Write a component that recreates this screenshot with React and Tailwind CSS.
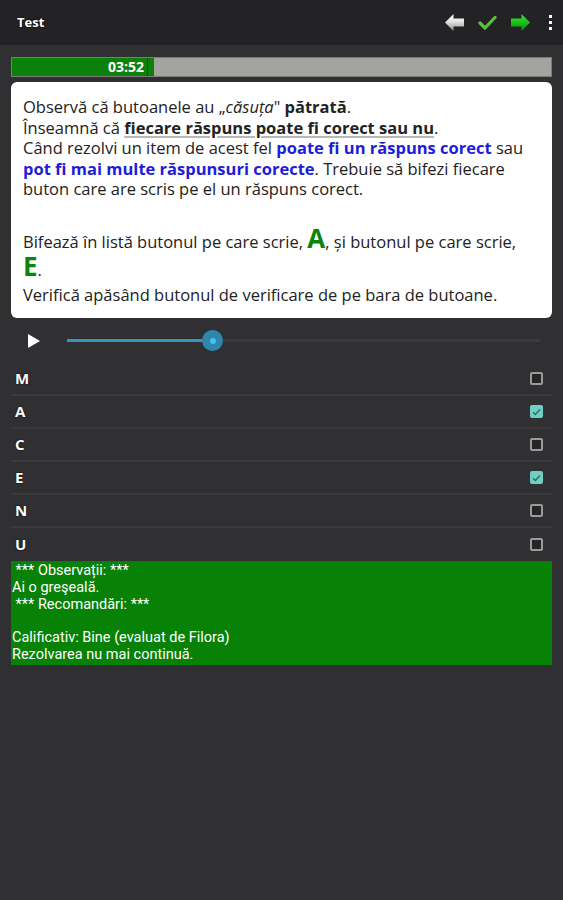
import React from "react";

function BackArrow() {
  return (
    <svg width="21" height="19" viewBox="0 0 21 19">
      <defs>
        <linearGradient id="ba" x1="0" y1="0" x2="0" y2="1">
          <stop offset="0" stopColor="#ffffff" />
          <stop offset="0.45" stopColor="#e2e2e2" />
          <stop offset="1" stopColor="#8a8a8a" />
        </linearGradient>
      </defs>
      <path d="M1 9.5 L9.5 1 L9.5 5.5 L20 5.5 L20 13.5 L9.5 13.5 L9.5 18 Z" fill="url(#ba)" />
    </svg>
  );
}

function FwdArrow() {
  return (
    <svg width="21" height="19" viewBox="0 0 21 19">
      <defs>
        <linearGradient id="fa" x1="0" y1="0" x2="0" y2="1">
          <stop offset="0" stopColor="#3ee83e" />
          <stop offset="0.5" stopColor="#19c019" />
          <stop offset="1" stopColor="#0a8a0a" />
        </linearGradient>
      </defs>
      <path d="M20 9.5 L11.5 1 L11.5 5.5 L1 5.5 L1 13.5 L11.5 13.5 L11.5 18 Z" fill="url(#fa)" />
    </svg>
  );
}

function CheckIcon() {
  return (
    <svg width="19" height="17" viewBox="0 0 19 17">
      <path d="M2 9 L7 14 L17 3.5" fill="none" stroke="#56c43a" strokeWidth="3.2" strokeLinecap="round" strokeLinejoin="round" />
    </svg>
  );
}

function Overflow() {
  return (
    <div className="flex flex-col items-center gap-[3px]">
      <div className="w-[3px] h-[3px] bg-white" />
      <div className="w-[3px] h-[3px] bg-white" />
      <div className="w-[3px] h-[3px] bg-white" />
    </div>
  );
}

function Box({ checked }) {
  if (checked) {
    return (
      <div className="w-[13px] h-[13px] rounded-[2px] bg-[#6fcfc3] flex items-center justify-center">
        <svg width="9" height="8" viewBox="0 0 9 8">
          <path d="M1 4.2 L3.4 6.5 L8 1.5" fill="none" stroke="#2a6e68" strokeWidth="1.5" />
        </svg>
      </div>
    );
  }
  return <div className="w-[13px] h-[13px] rounded-[2px] border-2 border-[#9a9a9a] bg-[#252426]" />;
}

const rows = [
  ["M", false],
  ["A", true],
  ["C", false],
  ["E", true],
  ["N", false],
  ["U", false],
];

export default function App() {
  return (
    <div className="w-[563px] h-[900px] bg-[#302f31] flex flex-col" style={{ fontFamily: "'Open Sans', Roboto, 'Liberation Sans', sans-serif" }}>
      <div className="h-[45px] bg-[#232224] flex items-center pl-[17px] pr-[11px] shrink-0">
        <span className="text-white font-bold text-[13px] [text-shadow:0_0_2px_#000]">Test</span>
        <div className="ml-auto flex items-center">
          <div className="mr-[13px]"><BackArrow /></div>
          <div className="mr-[13px]"><CheckIcon /></div>
          <div className="mr-[18px]"><FwdArrow /></div>
          <Overflow />
        </div>
      </div>

      <div className="px-[11px] pt-[12px]">
        <div className="h-[20px] flex bg-[#a3a3a0] border border-[#7c7c7a]">
          <div className="w-[135px] h-full bg-[#0a820a] flex items-center justify-end pr-[3px]">
            <span className="text-white font-bold text-[14px] leading-none">03:52</span>
          </div>
          <div className="w-[1px] h-full bg-[#2a3a2a]" />
          <div className="w-[6px] h-full bg-[#0a820a]" />
        </div>

        <div className="mt-[5px] bg-white rounded-[6px] pl-[12px] pr-[4px] pt-[15px] pb-[9px] text-[16.5px] leading-[20.5px] text-[#222] whitespace-nowrap">
          <div>
            Observă că butoanele au „<i>căsuța</i>" <b>pătrată</b>.
          </div>
          <div>
            Înseamnă că{" "}
            <b className="underline decoration-[#b8b8b8] decoration-2 underline-offset-2">fiecare răspuns poate fi corect sau nu</b>.
          </div>
          <div>
            Când rezolvi un item de acest fel <b className="text-[#1d1dd8]">poate fi un răspuns corect</b> sau
          </div>
          <div>
            <b className="text-[#1d1dd8]">pot fi mai multe răspunsuri corecte</b>. Trebuie să bifezi fiecare
          </div>
          <div>buton care are scris pe el un răspuns corect.</div>
          <div className="h-[20.5px]" />
          <div className="h-[28px] leading-[28px] mt-[5px]">
            Bifează în listă butonul pe care scrie, <b className="text-[#0b840b] text-[26px] leading-none">A</b>, și butonul pe care scrie,
          </div>
          <div className="h-[28px] leading-[28px]">
            <b className="text-[#0b840b] text-[26px] leading-none">E</b>.
          </div>
          <div className="h-[28px] leading-[28px]">Verifică apăsând butonul de verificare de pe bara de butoane.</div>
        </div>
      </div>

      <div className="h-[45px] flex items-center pl-[28px] pr-[23px]">
        <svg width="12" height="14" viewBox="0 0 12 14">
          <path d="M0 0 L12 7 L0 14 Z" fill="#ffffff" />
        </svg>
        <div className="ml-[27px] flex-1 h-[3px] bg-[#3b3a3c] relative">
          <div className="h-full w-[145px] bg-[#3895bf]" />
          <div className="absolute left-[135px] top-[-9px] w-[21px] h-[21px] rounded-full bg-[#2f86ad] flex items-center justify-center">
            <div className="w-[6px] h-[6px] rounded-full bg-[#4cc0ec]" />
          </div>
        </div>
      </div>

      <div className="px-[11px]">
        {rows.map(([l, c], i) => (
          <div key={l} className={"h-[33px] flex items-center pl-[4px] pr-[9px] " + (i < rows.length - 1 ? "border-b-2 border-[#3a393b]" : "")}>
            <span className="text-white font-bold text-[15px] [text-shadow:0_0_2px_#000]">{l}</span>
            <div className="ml-auto"><Box checked={c} /></div>
          </div>
        ))}
        <div className="bg-[#078207] text-white text-[14.5px] leading-[16.8px] pt-[2px] pb-[1px] pl-[1px] whitespace-pre" style={{ fontFamily: "Roboto, 'Open Sans', sans-serif" }}>
          <div>{" *** Observații: ***"}</div>
          <div>Ai o greşeală.</div>
          <div>{" *** Recomandări: ***"}</div>
          <div>{" "}</div>
          <div>Calificativ: Bine (evaluat de Filora)</div>
          <div>Rezolvarea nu mai continuă.</div>
        </div>
      </div>
    </div>
  );
}
